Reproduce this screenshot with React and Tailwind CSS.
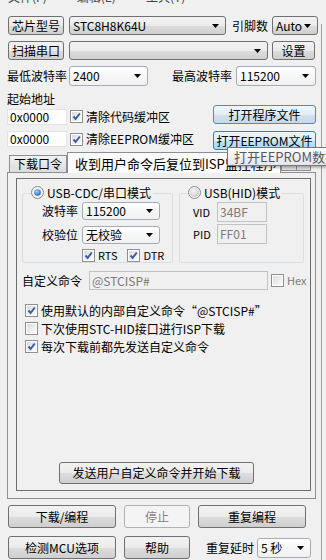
import React from 'react'

const BTN = 'flex items-center justify-center rounded-[3px] border border-[#707070] bg-[linear-gradient(#f2f2f2_0%,#ebebeb_50%,#dddddd_51%,#cfcfcf_100%)] text-[12px] leading-none text-black'

function Arrow() {
  return (
    <svg width="7" height="4" viewBox="0 0 7 4" className="shrink-0">
      <path d="M0 0H7L3.5 4Z" fill="#000" />
    </svg>
  )
}

function Combo({ value, className = '', white }) {
  return (
    <div
      className={`flex items-center justify-between pl-[3px] pr-[6px] rounded-[3px] border text-[12px] leading-none text-black ${
        white
          ? 'border-[#a5acb5] bg-[linear-gradient(#ffffff,#f0f0f0)]'
          : 'border-[#707070] bg-[linear-gradient(#f2f2f2_0%,#ebebeb_50%,#dddddd_51%,#cfcfcf_100%)]'
      } ${className}`}
    >
      <span>{value}</span>
      <Arrow />
    </div>
  )
}

function Check({ on = true, className = '' }) {
  return (
    <div className={`w-[13px] h-[13px] shrink-0 border border-[#8e8f8f] bg-white p-[1px] ${className}`}>
      <div className="w-full h-full bg-[linear-gradient(135deg,#dcdcdc,#fbfbfb)] relative">
        {on && (
          <svg width="11" height="11" viewBox="0 0 11 11" className="absolute -left-[1px] -top-[1px]">
            <path d="M2.5 5.5L4.6 8L8.8 2.5" stroke="#3a5da6" strokeWidth="2" fill="none" />
          </svg>
        )}
      </div>
    </div>
  )
}

function Radio({ on }) {
  return (
    <svg width="13" height="13" viewBox="0 0 13 13" className="shrink-0">
      <defs>
        <radialGradient id={on ? 'rOn' : 'rOff'} cx="0.4" cy="0.35" r="0.7">
          <stop offset="0" stopColor={on ? '#9fd3ff' : '#f6f6f6'} />
          <stop offset="1" stopColor={on ? '#1b5fb8' : '#c9c9c9'} />
        </radialGradient>
      </defs>
      <circle cx="6.5" cy="6.5" r="6" fill="#f2f2f2" stroke="#8a8a8a" />
      <circle cx="6.5" cy="6.5" r={on ? 3.3 : 4.6} fill={`url(#${on ? 'rOn' : 'rOff'})`} />
    </svg>
  )
}

function TextBox({ value, className = '', disabled }) {
  return (
    <div
      className={`flex items-center px-[2px] text-[12px] leading-none border ${
        disabled ? 'border-[#c2c2c2] bg-[#f0f0f0] text-[#7a7a7a]' : 'border-[#e3e3e3] bg-white text-black'
      } ${className}`}
    >
      {value}
    </div>
  )
}

export default function App() {
  return (
    <div className="w-[326px] h-[560px] overflow-hidden bg-[#f0f0f0] font-['Noto_Sans_CJK_SC','Liberation_Sans',sans-serif] text-[12px] leading-none text-black flex">
      {/* main column */}
      <div className="w-[320px] shrink-0 flex flex-col relative">
        {/* cut-off menu strip */}
        <div className="h-[4px] overflow-hidden pl-[8px] flex gap-[30px] text-[12px] text-[#444]">
          <span className="-mt-[9px]">文件(F)</span>
          <span className="-mt-[9px]">编辑(E)</span>
          <span className="-mt-[9px]">工具(T)</span>
        </div>

        {/* row 1 */}
        <div className="mt-[12px] pl-[8px] flex items-center h-[19px]">
          <div className={`${BTN} w-[56px] h-[19px]`}>芯片型号</div>
          <Combo value="STC8H8K64U" className="ml-[5px] w-[157px] h-[19px]" />
          <span className="ml-[6px]">引脚数</span>
          <Combo value="Auto" className="ml-[4px] w-[46px] h-[19px]" />
        </div>

        {/* row 2 */}
        <div className="mt-[6px] pl-[8px] flex items-center h-[19px]">
          <div className={`${BTN} w-[56px] h-[19px]`}>扫描串口</div>
          <Combo value="" className="ml-[5px] w-[199px] h-[19px]" />
          <div className={`${BTN} ml-[4px] w-[43px] h-[19px]`}>设置</div>
        </div>

        {/* row 3 */}
        <div className="mt-[6px] pl-[7px] flex items-center h-[20px]">
          <span className="w-[62px]">最低波特率</span>
          <Combo value="2400" className="w-[79px] h-[20px]" white />
          <span className="ml-[24px] w-[64px]">最高波特率</span>
          <Combo value="115200" className="w-[80px] h-[20px]" white />
        </div>

        <div className="mt-[7px] pl-[7px]">起始地址</div>

        {/* addr rows */}
        <div className="mt-[0px] pl-[7px] flex items-start h-[20px]">
          <TextBox value="0x0000" className="mt-[4px] w-[60px] h-[16px]" />
          <Check className="mt-[5px] ml-[3px]" />
          <span className="mt-[6px] ml-[3px]">清除代码缓冲区</span>
          <div className="flex-1" />
          <div className="mr-[4px] w-[103px] h-[19px] flex items-center justify-center rounded-[3px] border border-[#5a89b5] bg-[linear-gradient(#f1f6fa_0%,#e3edf5_50%,#d3e2ee_51%,#c6d9e8_100%)]">
            打开程序文件
          </div>
        </div>
        <div className="mt-[6px] pl-[7px] flex items-start h-[20px]">
          <TextBox value="0x0000" className="mt-[0px] w-[60px] h-[16px]" />
          <Check className="mt-[2px] ml-[3px]" />
          <span className="mt-[2px] ml-[3px]">清除EEPROM缓冲区</span>
          <div className="flex-1" />
          <div className="mr-[4px] w-[103px] h-[19px] flex items-center justify-center rounded-[3px] border border-[#3c7fb1] bg-[linear-gradient(#eaf6fd_0%,#d9f0fc_50%,#bee6fd_51%,#a7d9f5_100%)]">
            打开EEPROM文件
          </div>
        </div>

        {/* tab headers */}
        <div className="-mt-[1px] pl-[9px] flex items-end h-[22px]">
          <div className="w-[58px] h-[17px] flex items-center justify-center border border-b-0 border-[#8c8e94] bg-[linear-gradient(#f2f2f2,#dcdcdc)] text-[12px]">
            下载口令
          </div>
          <div className="w-[214px] h-[21px] pl-[7px] flex items-center border border-b-0 border-[#8c8e94] bg-[#fbfbfb] text-[13px] whitespace-nowrap overflow-hidden -mb-[1px] relative z-[1]">
            收到用户命令后复位到ISP监控程序
          </div>
          <div className="ml-[0px] mb-[1px] w-[30px] h-[16px] flex border border-[#8c8e94] bg-[linear-gradient(#f2f2f2,#dcdcdc)]">
            <div className="flex-1 border-r border-[#8c8e94]" />
            <div className="flex-1" />
          </div>
        </div>

        {/* tab panel */}
        <div className="ml-[7px] w-[309px] h-[327px] border border-[#8c8e94] bg-[#f0f0f0] pt-[5px] pl-[8px]">
          <div className="w-[295px] h-[313px] border border-[#6d6d6d] flex flex-col pl-[5px]">
            {/* groups */}
            <div className="mt-[9px] flex gap-[6px]">
              {/* CDC group */}
              <div className="relative w-[151px] h-[70px] mt-[5px] rounded-[3px] border border-[#d5dfe5]">
                <div className="absolute -top-[8px] left-[8px] flex items-center gap-[3px] bg-[#f0f0f0] pr-[2px]">
                  <Radio on />
                  <span>USB-CDC/串口模式</span>
                </div>
                <div className="mt-[8px] ml-[19px] flex items-center">
                  <span className="w-[40px]">波特率</span>
                  <Combo value="115200" className="w-[78px] h-[18px]" white />
                </div>
                <div className="mt-[6px] ml-[19px] flex items-center">
                  <span className="w-[40px]">校验位</span>
                  <Combo value="无校验" className="w-[78px] h-[18px]" white />
                </div>
                <div className="mt-[5px] ml-[59px] flex items-center">
                  <Check />
                  <span className="ml-[3px] text-[11px]">RTS</span>
                  <Check className="ml-[10px]" />
                  <span className="ml-[3px] text-[11px]">DTR</span>
                </div>
              </div>
              {/* HID group */}
              <div className="relative w-[125px] h-[70px] mt-[5px] rounded-[3px] border border-[#d5dfe5]">
                <div className="absolute -top-[8px] left-[8px] flex items-center gap-[3px] bg-[#f0f0f0] pr-[2px]">
                  <Radio />
                  <span>USB(HID)模式</span>
                </div>
                <div className="mt-[8px] ml-[13px] flex items-center">
                  <span className="w-[24px] text-[11px]">VID</span>
                  <TextBox value="34BF" disabled className="w-[50px] h-[20px]" />
                </div>
                <div className="mt-[2px] ml-[13px] flex items-center">
                  <span className="w-[24px] text-[11px]">PID</span>
                  <TextBox value="FF01" disabled className="w-[50px] h-[20px]" />
                </div>
              </div>
            </div>

            {/* custom command */}
            <div className="mt-[8px] flex items-center">
              <span className="w-[67px]">自定义命令</span>
              <TextBox value="@STCISP#" disabled className="w-[179px] h-[19px] text-[11px]" />
              <Check on={false} className="ml-[3px]" />
              <span className="ml-[3px] text-[11px] text-[#7a7a7a]">Hex</span>
            </div>

            <div className="mt-[14px] flex flex-col gap-[5px] pl-[3px]">
              <div className="flex items-center gap-[3px]">
                <Check />
                <span>使用默认的内部自定义命令“@STCISP#”</span>
              </div>
              <div className="flex items-center gap-[3px]">
                <Check on={false} />
                <span>下次使用STC-HID接口进行ISP下载</span>
              </div>
              <div className="flex items-center gap-[3px]">
                <Check />
                <span>每次下载前都先发送自定义命令</span>
              </div>
            </div>

            <div className="flex-1" />
            <div className={`${BTN} mb-[6px] ml-[37px] w-[195px] h-[22px]`}>发送用户自定义命令并开始下载</div>
          </div>
        </div>

        {/* bottom buttons */}
        <div className="mt-[6px] pl-[8px] flex items-center">
          <div className={`${BTN} w-[108px] h-[23px]`}>下载/编程</div>
          <div className="ml-[8px] w-[66px] h-[23px] flex items-center justify-center rounded-[3px] border border-[#adb2b5] bg-[#f4f4f4] text-[#838383]">
            停止
          </div>
          <div className={`${BTN} ml-[8px] w-[108px] h-[23px]`}>重复编程</div>
        </div>
        <div className="mt-[8px] pl-[8px] flex items-center">
          <div className={`${BTN} w-[108px] h-[23px]`}>检测MCU选项</div>
          <div className={`${BTN} ml-[8px] w-[66px] h-[23px]`}>帮助</div>
          <span className="ml-[16px]">重复延时</span>
          <Combo value="5 秒" className="ml-[3px] w-[54px] h-[20px]" white />
        </div>

        {/* tooltip */}
        <div className="absolute left-[227px] top-[147px] h-[19px] w-[110px] pl-[6px] flex items-center border border-[#767676] bg-[linear-gradient(#ffffff,#e4e5f0)] text-[13px] text-[#575757] whitespace-nowrap font-['Noto_Sans_CJK_SC',sans-serif] shadow-[2px_2px_2px_rgba(0,0,0,0.25)] z-10">
          打开EEPROM数据
        </div>
      </div>

      {/* right neighbour panel edge */}
      <div className="flex-1 mt-[24px] border-l border-[#a0a0a0] ml-[1px] bg-[#f0f0f0]" />
    </div>
  )
}
